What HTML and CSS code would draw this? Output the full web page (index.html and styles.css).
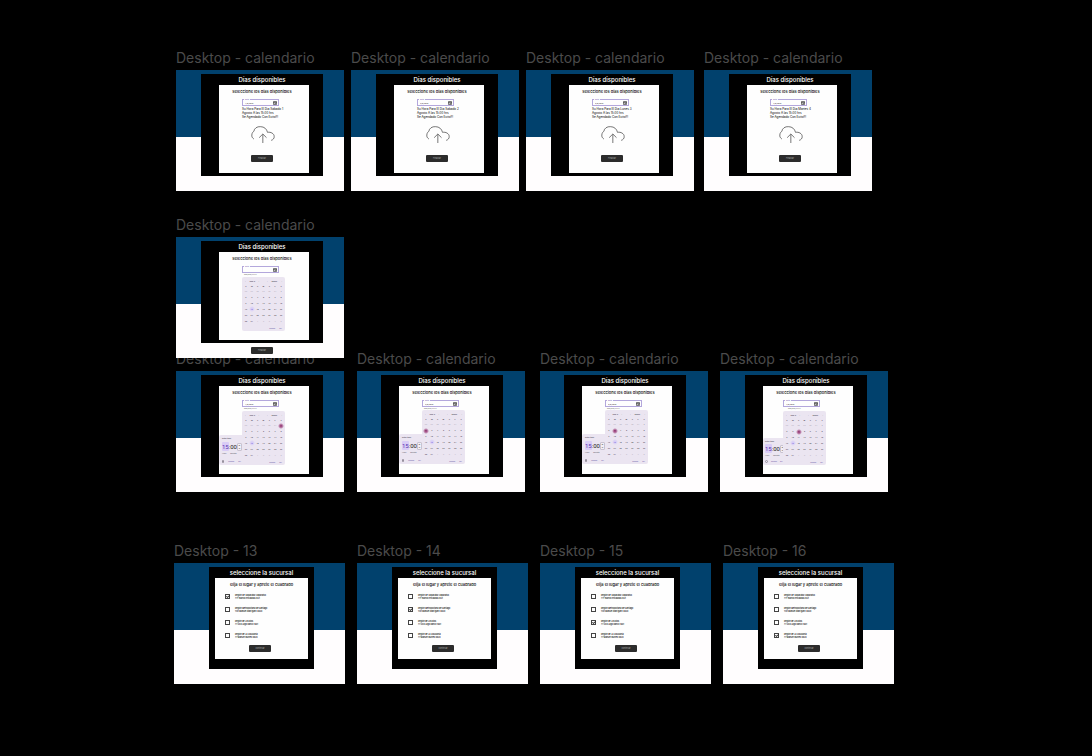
FILE: index.html
```html
<!DOCTYPE html>
<html lang="es">
<head>
<meta charset="utf-8">
<title>Desktop - calendario</title>
<link rel="stylesheet" href="styles.css">
</head>
<body>
<main class="canvas" id="canvas"></main>
<script src="app.js"></script>
</body>
</html>
```

FILE: styles.css
```css
* { box-sizing: border-box; }
body { margin: 0; background: #000; font-family: Inter, "Liberation Sans", sans-serif; }
button, input { font: inherit; color: inherit; margin: 0; padding: 0; border: 0; background: none; }
h2, h3, p, ul { margin: 0; padding: 0; font-weight: 500; }

.canvas { position: relative; min-height: 100vh; overflow: hidden; }
.node { position: absolute; margin: 0; width: 168px; }
.node--wide { width: 171px; }
.node--front { z-index: 1; }
.node__name { height: 20px; font-size: 14px; line-height: 16px; color: #4b4b4b; white-space: nowrap; }

.frame { min-height: 121px; padding: 4px 0 0 25px; background: linear-gradient(#01416d 67px, #fffdfe 67px); }
.node--shift .frame { padding-left: 24px; }
.node--wide .frame { padding-left: 35px; }
.panel { width: 122px; min-height: 102px; padding: 0 14px 0 18px; background: #000; }
.node--wide .panel { width: 105px; padding: 0 6px; }
.panel__title { font-size: 6px; line-height: 11px; color: #fff; text-align: center; white-space: nowrap; }
.node--date .panel__title, .node--date .card__title { padding-right: 4px; }
.card { min-height: 88px; padding-top: 4px; background: #fefefe; color: #111; }
.node--wide .card { min-height: 81px; }
.card__title { font-size: 4px; font-weight: 500; line-height: 5px; text-align: center; white-space: nowrap; color: #000; }

.field { position: relative; width: 37px; height: 7px; margin: 5px 0 0 23px; padding: 0 1px 0 2px; display: flex; align-items: center; border: 1px solid #b3a7dc; font-family: Roboto, sans-serif; }
.field--left { margin-left: 20px; }
.field__label { position: absolute; left: 1px; top: -2px; padding: 0 1px; background: #fefefe; color: #7a68b8; font-size: 2px; line-height: 2px; }
.field__input { flex: 1; min-width: 0; height: 4px; font-size: 2px; line-height: 4px; color: #333; outline: 0; }
.field__icon { width: 4px; height: 4px; display: block; }
.hint { margin-left: 25px; height: 4px; font: 2px/3px Roboto, sans-serif; color: #666; }
.node--shift .hint { height: 3px; }

.message { margin: 1px 0 0 23px; font: 3px/4px Inter, sans-serif; color: #000; white-space: nowrap; }
.cloud { display: block; width: 24px; height: 17px; margin: 7px 0 0 32px; fill: none; stroke: #333; stroke-width: 2; }
.button { display: block; width: 22px; height: 7px; margin: 12px 0 0 32px; border-radius: 1px; background: #2c2c2c; color: #aaa; font-size: 2px; line-height: 7px; text-align: center; }
.button--below { margin: 4px 0 0 50px; }
.button--branch { margin: 3px 0 0 34px; }

.pickers { display: flex; align-items: flex-end; }
.calendar { width: 43px; margin-left: 23px; padding: 0 1px; border-radius: 2px; background: #ebe5f1; color: #55505c; font: 2px/6px Roboto, sans-serif; }
.pickers--time .calendar { margin-left: 0; border-bottom-left-radius: 0; }
.calendar__bar { display: flex; justify-content: space-between; height: 7px; padding: 0 2px; line-height: 8px; font-weight: 700; }
.calendar__days { width: 100%; height: 40px; border-collapse: collapse; table-layout: fixed; text-align: center; }
.calendar__days th, .calendar__days td { padding: 0; height: 5px; line-height: 5px; font-weight: 700; }
.calendar__days .muted { color: #b9b2c2; }
.calendar__days .today { color: #6a4fd0; background: radial-gradient(circle, #d6ccf7 1px, transparent 3px); }
.calendar__days .picked { color: #6d1f55; background: radial-gradient(circle, #a34f86 1px, transparent 3px); }
.calendar__actions { display: flex; justify-content: flex-end; gap: 4px; height: 7px; padding-right: 2px; line-height: 7px; color: #6750a4; }
.calendar__actions button, .time__actions button { line-height: 4px; }

.time { width: 23px; min-height: 30px; padding: 2px 1px 0 3px; border-radius: 2px 0 0 2px; background: #ebe5f1; color: #55505c; font: 2px/3px Roboto, sans-serif; }
.time--small { width: 20px; min-height: 27px; padding: 2px 0 0 2px; }
.time__clock { display: flex; align-items: center; height: 9px; margin-top: 2px; font-size: 6px; line-height: 9px; color: #1d1b20; }
.time--small .time__clock { margin-top: 1px; }
.time__hour { color: #5a35b5; background: #d9ccf6; border-radius: 1px; }
.time__period { flex: none; display: flex; flex-direction: column; justify-content: center; margin-left: auto; width: 5px; height: 8px; border: 1px solid #c9c3d0; border-radius: 1px; background: #f3eff6; font-size: 1px; line-height: 3px; text-align: center; }
.time__units { display: flex; gap: 4px; margin-top: 1px; }
.time__actions { display: flex; align-items: center; gap: 4px; margin-top: 4px; color: #6750a4; }
.time--small .time__actions { margin-top: 2px; gap: 3px; }
.time__face { width: 3px; height: 3px; border: 1px solid #97919e; border-radius: 50%; }

.branches { padding: 3px 0 0 10px; list-style: none; }
.branch { display: flex; align-items: center; gap: 5px; height: 13px; }
.branch__box { appearance: none; flex: none; display: grid; place-items: center; width: 5px; height: 5px; border: 1px solid #444; }
.branch__box:checked::after { content: ""; width: 4px; height: 3px; background: #222; clip-path: polygon(0 50%, 15% 35%, 38% 62%, 88% 0, 100% 15%, 38% 100%); }
.branch__text { font: 500 2px/3px Inter, sans-serif; color: #000; white-space: nowrap; }
.branch__street { display: block; }
```

FILE: app.js
```js
const dateField = (id, value, left) => `
  <div class="field ${left ? 'field--left' : ''}">
    <label class="field__label" for="date-${id}">Date</label>
    <input class="field__input" id="date-${id}" type="text" value="${value}">
    <svg class="field__icon" viewBox="0 0 8 8"><path d="M1 1h6v6H1zM1 3h6M3 5h3" fill="none" stroke="#222" stroke-width="1.2"/></svg>
  </div>`;

const cloud = `<svg class="cloud" viewBox="-1 -1 71 51">
  <path d="M7 38C3 35 0 31 1 26C1 20 5 16 7 15C8 6 17 0 27 1C38 1 46 8 48 18C58 16 68 22 68 30C69 36 64 41 59 42M34 50V24M23 34L34 23L45 34"/></svg>`;

function calendar(picked) {
  const first = -6;
  let rows = '';
  for (let week = 0; week < 6; week++) {
    rows += '<tr>';
    for (let day = 0; day < 7; day++) {
      const n = first + week * 7 + day + 1;
      const shown = n < 1 ? n + 31 : n > 31 ? n - 31 : n;
      const state = n === picked ? 'picked' : n === 17 ? 'today' : n < 1 || n > 31 ? 'muted' : '';
      rows += `<td class="${state}">${shown}</td>`;
    }
    rows += '</tr>';
  }
  return `<section class="calendar">
    <div class="calendar__bar"><span>‹</span><span>Aug ▾</span><span>›</span><span></span><span>‹</span><span>2026 ▾</span><span>›</span></div>
    <table class="calendar__days"><thead><tr>${[...'SMTWTFS'].map(d => `<th>${d}</th>`).join('')}</tr></thead><tbody>${rows}</tbody></table>
    <div class="calendar__actions"><button>Cancel</button><button>OK</button></div>
  </section>`;
}

const timePicker = small => `<section class="time ${small ? 'time--small' : ''}">
  <p>Enter time</p>
  <div class="time__clock"><span class="time__hour">15</span><span>:00</span><span class="time__period"><span>AM</span><span>PM</span></span></div>
  <div class="time__units"><span>Hour</span><span>Minute</span></div>
  <div class="time__actions"><span class="time__face"></span><button>Cancel</button><button>OK</button></div>
</section>`;

const branches = [
  ['Región De Valparaíso Valparaíso', '777 Blanco Encalada 2021'],
  ['Región Metropolitana de Santiago', '1101 Manuel Rodriguez 0820'],
  ['Región de Los Ríos', '77 208 Lago Ranco 1601'],
  ['Región de La Araucanía', '77 Manuel Bulnes 0820']
];

const branchList = (id, checked) => `<ul class="branches">${branches.map(([name, street], i) => `
  <li class="branch">
    <input class="branch__box" type="checkbox" id="b-${id}-${i}" ${i === checked ? 'checked' : ''}>
    <label class="branch__text" for="b-${id}-${i}">${name}<span class="branch__street">${street}</span></label>
  </li>`).join('')}</ul>`;

const done = (id, value, when) => dateField(id, value) +
  `<p class="message">Su Hora Para El Dia ${when}<br>Agosto A las 15:00 hrs<br>Se Agendado Con Exito!!!</p>${cloud}<button class="button">Finalizar</button>`;

const pick = (id, value, day, small) => dateField(id, value, small) +
  `<p class="hint">MM/DD/YYYY</p><div class="pickers pickers--time">${timePicker(small)}${calendar(day)}</div>`;

const nodes = [
  { x: 176, y: 50, body: done(1, '1/8/2026', 'Sabado 1') },
  { x: 351, y: 50, body: done(2, '2/8/2026', 'Sabado 2') },
  { x: 526, y: 50, body: done(3, '3/8/2026', 'Lunes 3') },
  { x: 704, y: 50, body: done(4, '4/8/2026', 'Martes 4') },
  { x: 176, y: 217, kind: 'node--front', after: '<button class="button button--below">Finalizar</button>',
    body: dateField(5, '') + `<p class="hint">MM/DD/YYYY</p><div class="pickers">${calendar(null)}</div>` },
  { x: 176, y: 351, body: pick(6, '1/8/2026', 1) },
  { x: 357, y: 351, kind: 'node--shift', body: pick(7, '2/8/2026', 2) },
  { x: 540, y: 351, kind: 'node--shift', body: pick(8, '3/8/2026', 3) },
  { x: 720, y: 351, body: pick(9, '4/8/2026', 4, true) },
  ...[174, 357, 540, 723].map((x, i) => ({
    x, y: 543, name: `Desktop - ${13 + i}`, kind: 'node--wide',
    title: 'seleccione la sucursal', sub: 'elija el lugar y aprete el cuadrado',
    body: branchList(i, i) + '<button class="button button--branch">Continuar</button>'
  }))
];

document.getElementById('canvas').innerHTML = nodes.map(n => `
  <figure class="node ${n.title ? '' : 'node--date'} ${n.kind || ''}" style="left:${n.x}px;top:${n.y}px">
    <figcaption class="node__name">${n.name || 'Desktop - calendario'}</figcaption>
    <div class="frame">
      <div class="panel">
        <h2 class="panel__title">${n.title || 'Días disponibles'}</h2>
        <div class="card"><h3 class="card__title">${n.sub || 'seleccione los días disponibles'}</h3>${n.body}</div>
      </div>${n.after || ''}
    </div>
  </figure>`).join('');
```
